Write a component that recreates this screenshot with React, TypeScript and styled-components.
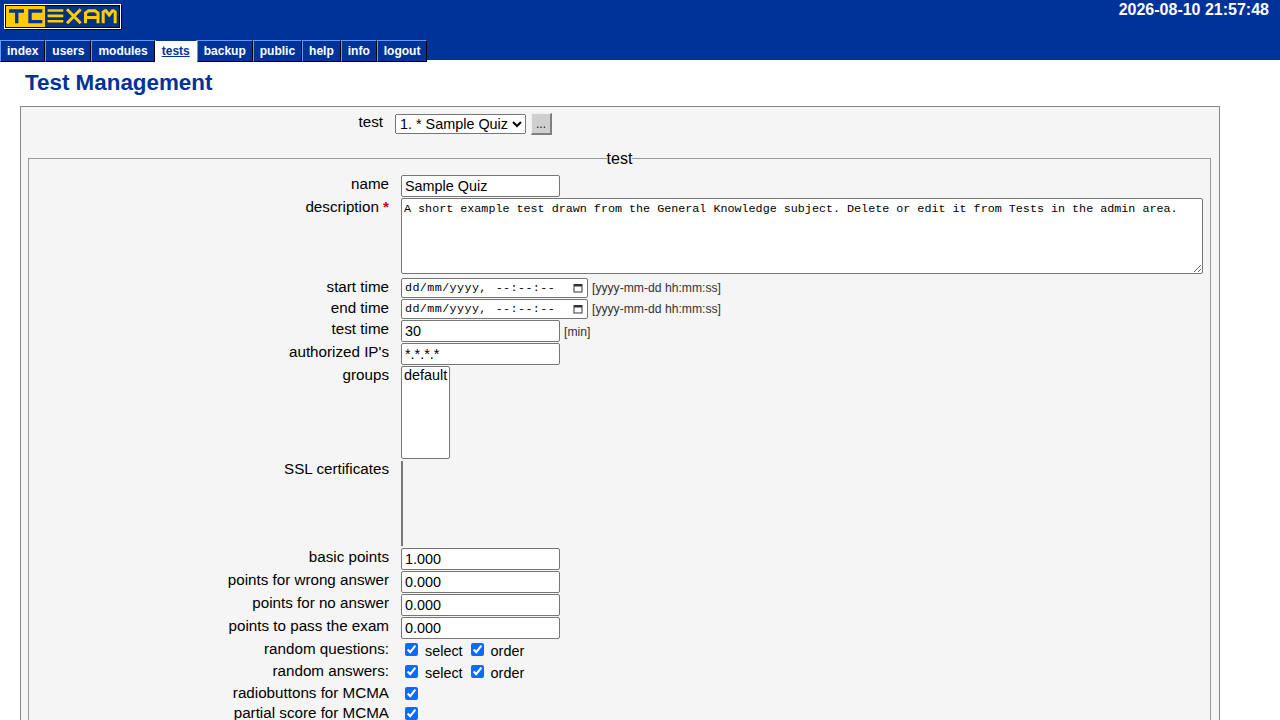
import React from "react";
import styled, { createGlobalStyle } from "styled-components";

const Global = createGlobalStyle`
  html, body { margin: 0; padding: 0; background: #fff; height: 720px; overflow: hidden; }
  body { font-family: "Liberation Sans", Arial, sans-serif; color: #000; }
`;

const Header = styled.header`
  background: #003399;
  height: 60px;
  position: relative;
`;
const TopRow = styled.div`
  display: flex;
  justify-content: space-between;
  align-items: flex-start;
  height: 40px;
  padding: 4px 11px 0 4px;
  box-sizing: border-box;
`;
const Clock = styled.div`
  color: #fff;
  font-size: 16px;
  font-weight: bold;
  line-height: 11px;
`;
const Logo = styled.svg`
  display: block;
`;
const Nav = styled.nav`
  display: flex;
  padding-left: 0;
`;
const Tab = styled.a<{ $active?: boolean }>`
  display: block;
  box-sizing: border-box;
  height: 22px;
  padding: 0 6px;
  font-size: 12px;
  font-weight: bold;
  line-height: 21px;
  color: ${(p) => (p.$active ? "#003399" : "#fff")};
  background: ${(p) => (p.$active ? "#fff" : "#003399")};
  border: 1px solid;
  border-color: ${(p) => (p.$active ? "#003399 #fff #fff #fff" : "#69f #000 #000 #69f")};
  text-decoration: ${(p) => (p.$active ? "underline" : "none")};
`;
const Title = styled.h1`
  margin: 0;
  padding: 10px 0 0 25px;
  height: 46px;
  box-sizing: border-box;
  font-size: 22.4px;
  line-height: 26px;
  color: #003399;
`;
const Panel = styled.main`
  margin-left: 20px;
  width: 1200px;
  box-sizing: border-box;
  border: 1px solid #888;
  background: #f5f5f5;
  padding: 6px 8px 0 7px;
`;
const TopSelectRow = styled.div`
  display: flex;
  align-items: flex-start;
  height: 35px;
`;
const TopLabel = styled.span`
  width: 367px;
  margin-top: 1px;
  text-align: right;
  font-size: 15.2px;
  line-height: 16px;
  padding-right: 12px;
  box-sizing: border-box;
`;
const Select = styled.select`
  font-family: "Liberation Sans", Arial, sans-serif;
  font-size: 14.4px;
  height: 20px;
  width: 131px;
  margin: 1px 5px 0 0;
  box-sizing: border-box;
`;
const MoreButton = styled.button`
  width: 21px;
  height: 22px;
  padding: 0;
  box-sizing: border-box;
  font-size: 12px;
  font-family: "Liberation Sans", Arial, sans-serif;
  background: #cfcfcf;
  border-style: solid;
  border-width: 1px 2px 2px 1px;
  border-color: #f0f0f0 #808080 #808080 #f0f0f0;
  color: #111;
`;
const Fieldset = styled.fieldset`
  margin: 0;
  padding: 7px 7px 0 7px;
  border: 1px solid #999;
  min-width: 0;
  background: #f5f5f5;
`;
const Legend = styled.legend`
  padding: 2px 0 0;
  margin: 0 auto;
  font-size: 16px;
  line-height: 18px;
`;
const Row = styled.div<{ $h: number }>`
  display: grid;
  grid-template-columns: 353px 1fr;
  column-gap: 12px;
  height: ${(p) => p.$h}px;
  align-items: start;
`;
const Label = styled.label<{ $raised?: boolean }>`
  text-align: right;
  font-size: 15.2px;
  line-height: 17px;
  margin-top: ${(p) => (p.$raised ? -1 : 0)}px;
`;
const Required = styled.span`
  color: #c00020;
  font-weight: bold;
`;
const Cell = styled.div<{ $checks?: boolean }>`
  display: flex;
  align-items: flex-start;
  padding-top: ${(p) => (p.$checks ? 3 : 0)}px;
`;
const TextInput = styled.input`
  width: 159px;
  height: 22px;
  box-sizing: border-box;
  padding: 1px 3px;
  margin: 0;
  font-family: "Liberation Sans", Arial, sans-serif;
  font-size: 14.4px;
  border: 1px solid #767676;
  border-radius: 2px;
  background: #fff;
  outline: none;
`;
const TextArea = styled.textarea`
  display: block;
  width: 802px;
  height: 76px;
  box-sizing: border-box;
  margin: 0;
  padding: 3px 2px;
  font-family: "Liberation Mono", monospace;
  font-size: 11.73px;
  line-height: 14px;
  border: 1px solid #767676;
  border-radius: 2px;
  background: #fff;
`;
const DateField = styled.div`
  display: flex;
  align-items: center;
  justify-content: space-between;
  width: 187px;
  height: 20px;
  box-sizing: border-box;
  padding: 0 4px 0 3px;
  font-family: "Liberation Mono", monospace;
  font-size: 11.73px;
  letter-spacing: 0.4px;
  word-spacing: 1.5px;
  color: #000;
  border: 1px solid #767676;
  border-radius: 2px;
  background: #fff;
`;
const Hint = styled.span<{ $top: number }>`
  margin: ${(p) => p.$top}px 0 0 4px;
  font-size: 12.16px;
  line-height: 14px;
  color: #333;
`;
const ListBox = styled.select`
  display: block;
  width: 49px;
  height: 93px;
  box-sizing: border-box;
  margin: 0;
  font-family: "Liberation Sans", Arial, sans-serif;
  font-size: 14.4px;
  border: 1px solid #767676;
  border-radius: 2px;
  background: #fff;
  option { padding: 0 2px; }
`;
const EmptyList = styled.div`
  width: 0;
  height: 85px;
  border-left: 2px solid #777;
`;
const Check = styled.input.attrs({ type: "checkbox" })`
  width: 13px;
  height: 13px;
  margin: 0 0 0 4px;
  accent-color: #0a6cff;
`;
const CheckLabel = styled.span`
  font-size: 14.4px;
  line-height: 16px;
  margin: 0 4px 0 7px;
`;

function LogoMark() {
  const y = "#ffcc00";
  const b = "#003399";
  return (
    <Logo width="118" height="26" viewBox="0 0 118 26" role="img" aria-label="TCExam">
      <rect x="1" y="1" width="117" height="25" fill="#000" />
      <rect x="0" y="0" width="117" height="25" fill="#fff" />
      <rect x="1" y="1" width="115" height="23" fill="#000" />
      <rect x="2" y="2" width="113" height="21" fill="#00337f" />
      <rect x="2" y="2" width="39" height="21" fill={y} />
      <g fill="none" stroke={b} strokeWidth="3.4">
        <path d="M5 7H20M12.7 7V19.3" />
        <path d="M38.3 7H26V17.6H38.3" />
      </g>
      <g fill="none" stroke={y} strokeWidth="2.6">
        <path d="M43.6 6.5H59.3M43.6 11.9H59.3M43.6 17.3H59.3" />
      </g>
      <g fill="none" stroke={y} strokeWidth="3">
        <path d="M63 5.3L76.7 19.3M76.7 5.3L63 19.3" />
        <path d="M81.5 19.3V9L84.5 6.8H91L94 9V19.3M81.5 13.5H94" />
        <path d="M99.2 19.3V8L101 6.8H102L105.2 11L108.5 6.8H109.5L111.2 8V19.3" />
      </g>
    </Logo>
  );
}

function CalendarIcon() {
  return (
    <svg width="10" height="10" viewBox="0 0 10 10" aria-hidden="true">
      <rect x="1" y="1.5" width="8" height="7.5" fill="none" stroke="#333" strokeWidth="1" />
      <rect x="1" y="1" width="8" height="2.5" fill="#333" />
    </svg>
  );
}

function DateValue() {
  return (
    <DateField>
      <span>dd/mm/yyyy, --:--:--</span>
      <CalendarIcon />
    </DateField>
  );
}

const tabs = ["index", "users", "modules", "tests", "backup", "public", "help", "info", "logout"];

export default function App() {
  return (
    <>
      <Global />
      <Header>
        <TopRow>
          <LogoMark />
          <Clock>2026-08-10 21:57:48</Clock>
        </TopRow>
        <Nav>
          {tabs.map((t) => (
            <Tab key={t} href="#" $active={t === "tests"}>
              {t}
            </Tab>
          ))}
        </Nav>
      </Header>
      <Title>Test Management</Title>
      <Panel>
        <TopSelectRow>
          <TopLabel>test</TopLabel>
          <Select defaultValue="1">
            <option value="1">1. * Sample Quiz</option>
          </Select>
          <MoreButton>...</MoreButton>
        </TopSelectRow>
        <Fieldset>
          <Legend>test</Legend>
          <Row $h={23}>
            <Label>name</Label>
            <Cell><TextInput defaultValue="Sample Quiz" /></Cell>
          </Row>
          <Row $h={80}>
            <Label>description <Required>*</Required></Label>
            <Cell>
              <TextArea defaultValue="A short example test drawn from the General Knowledge subject. Delete or edit it from Tests in the admin area." />
            </Cell>
          </Row>
          <Row $h={21}>
            <Label>start time</Label>
            <Cell><DateValue /><Hint $top={3}>[yyyy-mm-dd hh:mm:ss]</Hint></Cell>
          </Row>
          <Row $h={21}>
            <Label>end time</Label>
            <Cell><DateValue /><Hint $top={3}>[yyyy-mm-dd hh:mm:ss]</Hint></Cell>
          </Row>
          <Row $h={23}>
            <Label>test time</Label>
            <Cell><TextInput defaultValue="30" /><Hint $top={5}>[min]</Hint></Cell>
          </Row>
          <Row $h={23}>
            <Label>authorized IP's</Label>
            <Cell><TextInput defaultValue="*.*.*.*" /></Cell>
          </Row>
          <Row $h={95}>
            <Label>groups</Label>
            <Cell>
              <ListBox multiple size={5}><option>default</option></ListBox>
            </Cell>
          </Row>
          <Row $h={87}>
            <Label $raised>SSL certificates</Label>
            <Cell><EmptyList /></Cell>
          </Row>
          <Row $h={23}>
            <Label>basic points</Label>
            <Cell><TextInput defaultValue="1.000" /></Cell>
          </Row>
          <Row $h={23}>
            <Label>points for wrong answer</Label>
            <Cell><TextInput defaultValue="0.000" /></Cell>
          </Row>
          <Row $h={23}>
            <Label>points for no answer</Label>
            <Cell><TextInput defaultValue="0.000" /></Cell>
          </Row>
          <Row $h={23}>
            <Label>points to pass the exam</Label>
            <Cell><TextInput defaultValue="0.000" /></Cell>
          </Row>
          <Row $h={22}>
            <Label>random questions:</Label>
            <Cell $checks><Check defaultChecked /><CheckLabel>select</CheckLabel><Check defaultChecked /><CheckLabel>order</CheckLabel></Cell>
          </Row>
          <Row $h={22}>
            <Label>random answers:</Label>
            <Cell $checks><Check defaultChecked /><CheckLabel>select</CheckLabel><Check defaultChecked /><CheckLabel>order</CheckLabel></Cell>
          </Row>
          <Row $h={20}>
            <Label>radiobuttons for MCMA</Label>
            <Cell $checks><Check defaultChecked /></Cell>
          </Row>
          <Row $h={20}>
            <Label>partial score for MCMA</Label>
            <Cell $checks><Check defaultChecked /></Cell>
          </Row>
        </Fieldset>
      </Panel>
    </>
  );
}
